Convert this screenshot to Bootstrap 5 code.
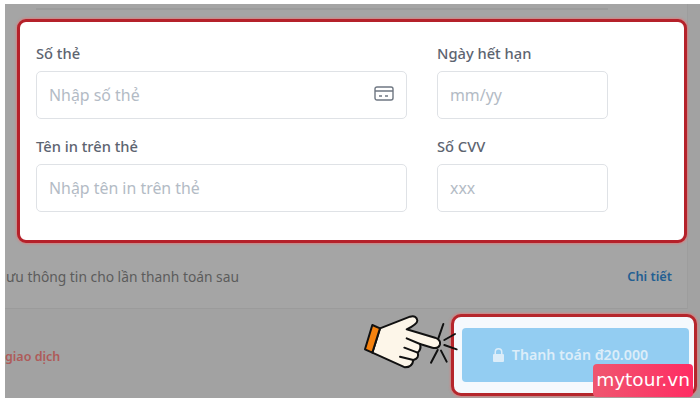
<!DOCTYPE html>
<html lang="vi">
<head>
    <meta charset="UTF-8">
    <title>Thanh toán</title>
    <link href="https://cdn.jsdelivr.net/npm/bootstrap@5.3.2/dist/css/bootstrap.min.css" rel="stylesheet">
    <style>
        html, body {
            height: 405px;
            overflow: hidden;
            background-color: #fff;
        }
        body {
            font-family: "Noto Sans", "Liberation Sans", sans-serif;
            padding: 4px 0 7px 5px;
        }
        .shot {
            position: relative;
            height: 394px;
            background-color: #a2a2a2;
            overflow: hidden;
        }
        .upper {
            width: 683px;
            height: 305px;
            padding-top: 4px;
            background-color: #a5a5a5;
            border-right: 1px solid #9d9d9d;
            border-bottom: 1px solid #9b9b9b;
        }
        .top-line {
            width: 572px;
            height: 2px;
            margin-left: 31px;
            background-color: #9c9c9c;
        }
        .red-box {
            width: 670px;
            height: 224px;
            margin: 9px 0 0 12px;
            padding: 21px 16px 0;
            background-color: #fff;
            border: 3px solid #b5212a;
            border-radius: 9px;
            box-shadow: 0 0 2px 1px rgba(226, 120, 120, .75);
        }
        .field-grid {
            grid-template-columns: 371px 171px;
            column-gap: 30px;
            row-gap: 17px;
        }
        .field-label {
            display: block;
            margin-bottom: 8px;
            font-size: 14.7px;
            font-weight: 500;
            line-height: 20px;
            color: #5d6470;
        }
        .field-input {
            height: 48px;
            padding: 0 12px;
            font-size: 15.9px;
            border: 1.5px solid #dfe2e6;
            border-radius: 5px;
        }
        .field-input::placeholder {
            color: #b3bbc5;
            opacity: 1;
        }
        .card-icon {
            position: absolute;
            top: 15px;
            right: 13px;
        }
        .save-row {
            height: 60px;
            padding: 8px 15px 0 1px;
            font-size: 13.8px;
        }
        .save-text {
            color: #5c5c5c;
        }
        .detail-link {
            font-size: 12.8px;
            font-weight: 600;
            color: #235f92;
            text-decoration: none;
        }
        .pay-row {
            height: 88px;
            padding: 3px 3px 0 0;
        }
        .cancel-text {
            margin-top: 5px;
            font-size: 12.5px;
            font-weight: 600;
            color: #ae5b59;
        }
        .pay-box {
            width: 246px;
            height: 82px;
            padding: 11px 6px 0 8px;
            background-color: #f5f9fd;
            border: 3px solid #b5262c;
            border-radius: 10px;
            box-shadow: 0 0 2px 1px rgba(226, 120, 120, .7);
        }
        .pay-btn {
            width: 227px;
            height: 54px;
            padding: 0 10px 0 0;
            font-size: 14.2px;
            font-weight: 600;
            color: #dcedf9;
            background-color: #93cdf2;
            border: 0;
            border-radius: 4px;
        }
        .hand {
            position: absolute;
            left: 350px;
            top: 306px;
        }
        .stamp {
            position: absolute;
            left: 588px;
            top: 360px;
            width: 100px;
            height: 33px;
            font-family: "DejaVu Sans", sans-serif;
            font-size: 18.5px;
            font-weight: 500;
            line-height: 32px;
            text-align: center;
            color: #fff;
            background: linear-gradient(90deg, #ef566f, #ff2c63);
            border-radius: 4px;
        }
    </style>
</head>
<body>

<div class="shot">
    <div class="upper">
        <div class="top-line"></div>
        <form class="red-box">
            <div class="d-grid field-grid">
                <div>
                    <label class="field-label" for="cardNo">Số thẻ</label>
                    <div class="position-relative">
                        <input id="cardNo" class="form-control field-input" type="text" placeholder="Nhập số thẻ">
                        <svg class="card-icon" width="20" height="15" viewBox="0 0 20 15" fill="none" stroke="#6f7782" stroke-width="1.4">
                            <rect x="1" y="1" width="18" height="13" rx="2"/>
                            <path d="M1 5h18M5 10h3M11 10h3"/>
                        </svg>
                    </div>
                </div>
                <div>
                    <label class="field-label" for="expiry">Ngày hết hạn</label>
                    <input id="expiry" class="form-control field-input" type="text" placeholder="mm/yy">
                </div>
                <div>
                    <label class="field-label" for="holder">Tên in trên thẻ</label>
                    <input id="holder" class="form-control field-input" type="text" placeholder="Nhập tên in trên thẻ">
                </div>
                <div>
                    <label class="field-label" for="cvv">Số CVV</label>
                    <input id="cvv" class="form-control field-input" type="text" placeholder="xxx">
                </div>
            </div>
        </form>
        <div class="d-flex justify-content-between align-items-center save-row">
            <span class="save-text">ưu thông tin cho lần thanh toán sau</span>
            <a class="detail-link" href="#">Chi tiết</a>
        </div>
    </div>

    <div class="d-flex justify-content-between align-items-center pay-row">
        <span class="cancel-text">giao dịch</span>
        <div class="pay-box">
            <button class="pay-btn d-flex align-items-center justify-content-center gap-2" type="button">
                <svg width="11" height="14" viewBox="0 0 11 14" fill="#dcedf9">
                    <path d="M1.500 6V4a4 4 0 0 1 8 0v2h.5a1 1 0 0 1 1 1v6a1 1 0 0 1-1 1H1a1 1 0 0 1-1-1V7a1 1 0 0 1 1-1zM3 6h5V4a2.500 2.500 0 0 0-5 0z"/>
                </svg>
                Thanh toán đ20.000
            </button>
        </div>
    </div>

    <svg class="hand" width="110" height="70" viewBox="0 0 330 210" stroke="#111" stroke-width="6" stroke-linecap="round" stroke-linejoin="round">
        <path fill="#fdf6e9" d="M75 55 L165 20 Q185 15 187 32 Q187 42 155 58 L240 83 Q258 90 255 103 Q250 118 232 113 L195 102 Q200 118 188 128 Q194 145 175 150 Q172 172 150 172 L52 128 Z"/>
        <path fill="#f5820f" d="M52 45 L75 55 L52 128 L30 118 Z"/>
        <path fill="none" d="M155 85 L195 102M148 113 L188 128M135 140 L175 150"/>
        <path fill="none" d="M265 42 L250 85M300 72 L268 90M305 118 L268 105M228 158 L248 120M275 155 L258 122"/>
    </svg>

    <div class="stamp">mytour.vn</div>
</div>

<script src="https://cdn.jsdelivr.net/npm/bootstrap@5.3.2/dist/js/bootstrap.bundle.min.js"></script>
</body>
</html>
